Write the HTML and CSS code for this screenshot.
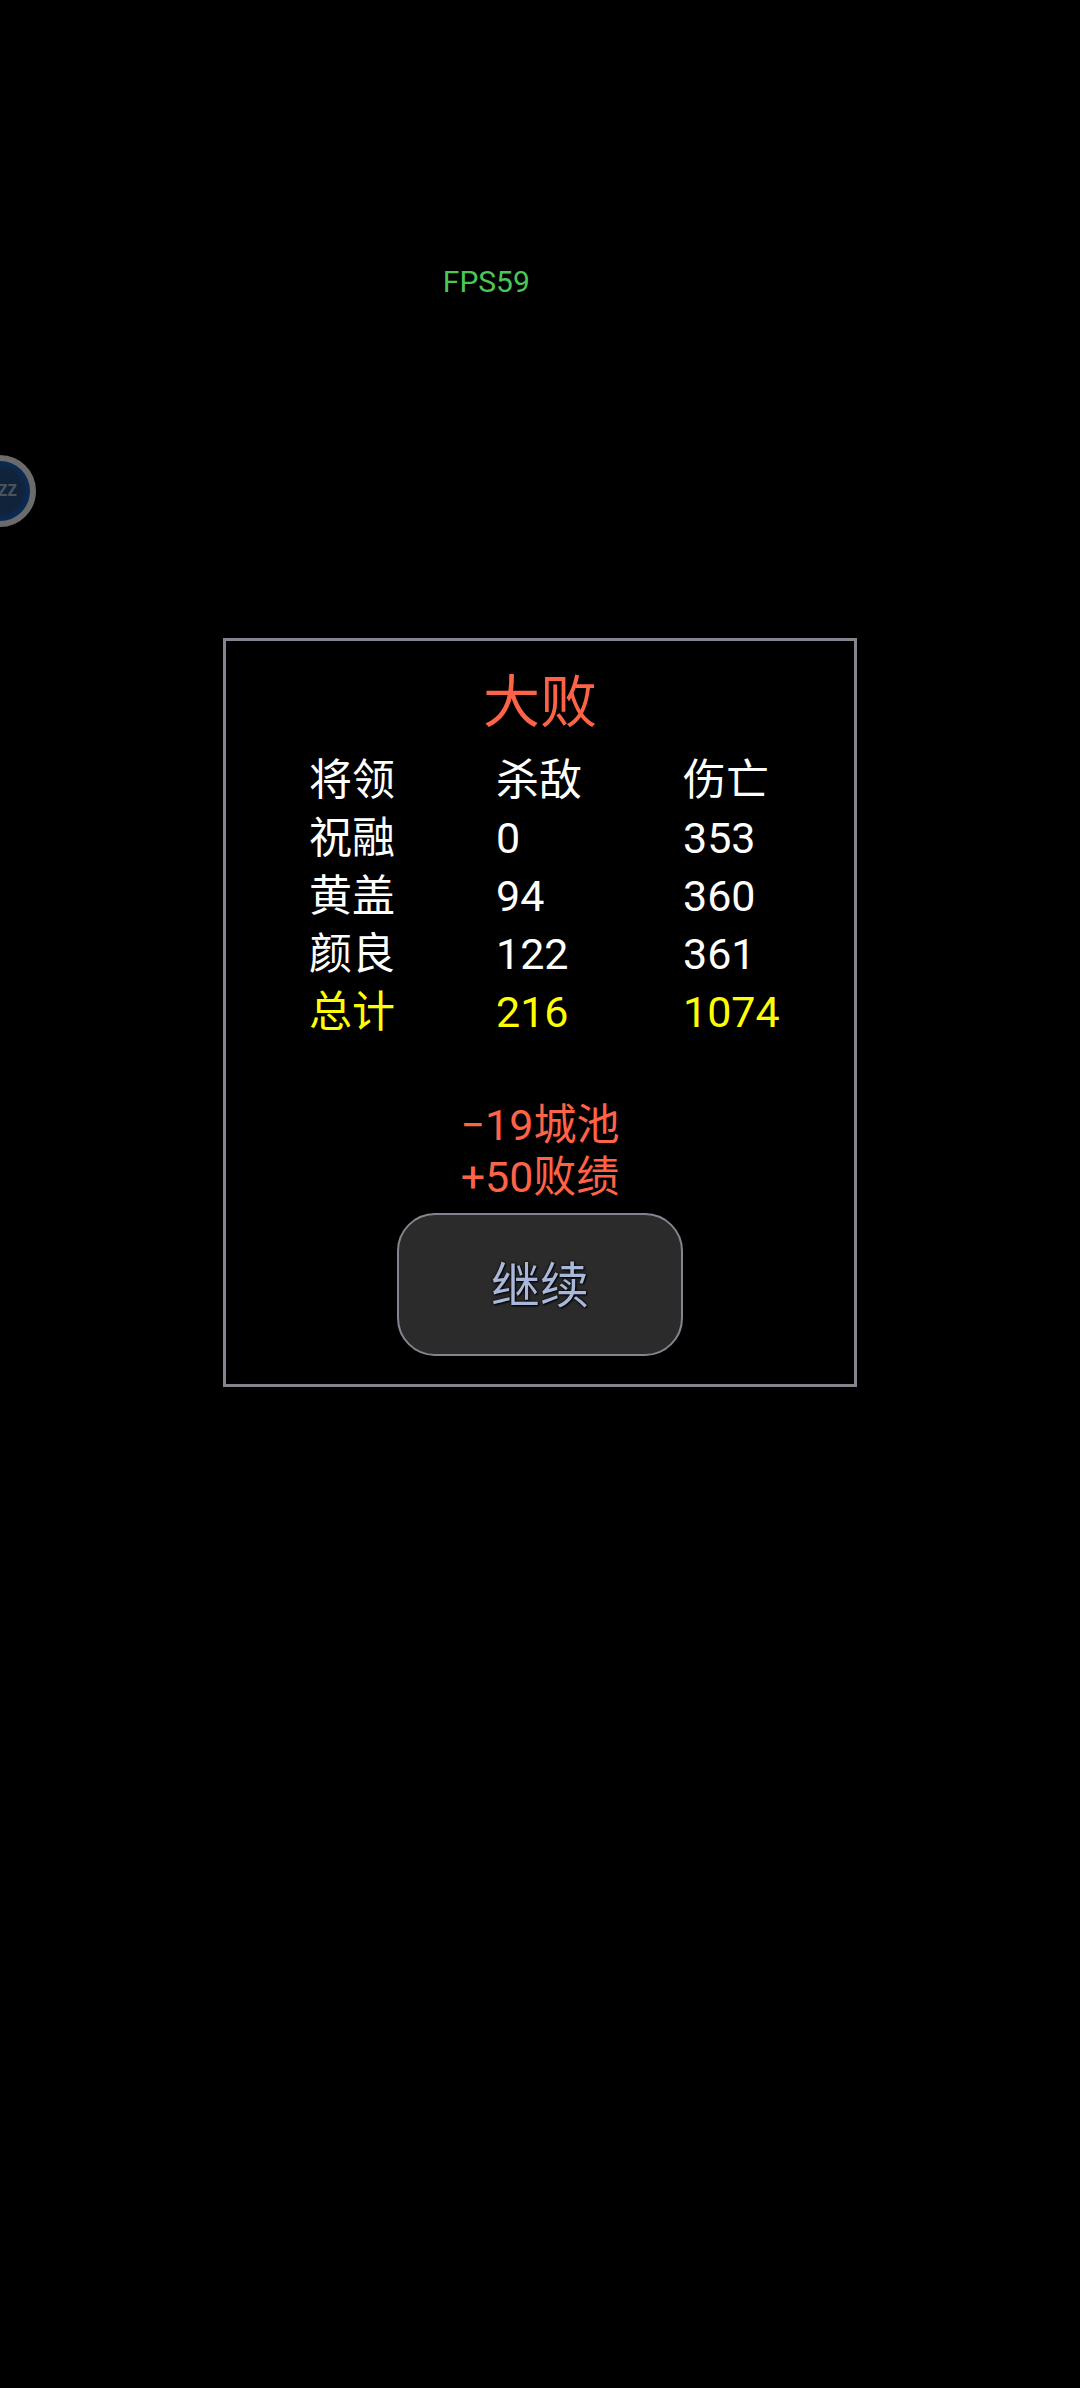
FILE: index.html
```html
<!DOCTYPE html>
<html lang="zh-CN">
<head>
<meta charset="utf-8">
<meta name="viewport" content="width=device-width, initial-scale=1">
<title>大败</title>
<link rel="stylesheet" href="styles.css">
</head>
<body>
<header class="hud"><span class="fps">FPS59</span></header>
<button class="floater" type="button">ZZ</button>
<main class="result">
  <h1 class="title">大败</h1>
  <table class="stats">
    <thead>
      <tr><th scope="col">将领</th><th scope="col">杀敌</th><th scope="col">伤亡</th></tr>
    </thead>
    <tbody>
      <tr><td>祝融</td><td>0</td><td>353</td></tr>
      <tr><td>黄盖</td><td>94</td><td>360</td></tr>
      <tr><td>颜良</td><td>122</td><td>361</td></tr>
    </tbody>
    <tfoot>
      <tr class="total"><td>总计</td><td>216</td><td>1074</td></tr>
    </tfoot>
  </table>
  <div class="outcome">
    <p>−19城池</p>
    <p>+50败绩</p>
  </div>
  <button class="continue" type="button">继续</button>
</main>
</body>
</html>
```
FILE: styles.css
```css
* {
  box-sizing: border-box;
}

body {
  margin: 0;
  min-height: 100vh;
  background: #000;
  color: #fff;
  font-family: Roboto, "Noto Sans CJK SC", sans-serif;
  font-size: 43px;
}

.hud {
  padding: 262px 0 336px 41%;
  font-size: 30px;
  line-height: 40px;
}

.fps {
  color: #4bc756;
}

/* Half-hidden assist ball docked at the screen edge */
.floater {
  position: absolute;
  top: 455px;
  left: -36px;
  width: 72px;
  height: 72px;
  padding: 0 13px 0 0;
  border: 6px solid #6b6b6b;
  border-radius: 50%;
  background: radial-gradient(circle, #10233a 0 22px, #0a2a52 28px);
  color: #4a535d;
  font: bold 16px/24px "DejaVu Sans Mono", monospace;
  text-align: right;
}

.result {
  display: flex;
  flex-direction: column;
  align-items: center;
  width: 634px;
  max-width: 100%;
  margin: 0 auto;
  padding: 24px 0 28px;
  border: 3px solid #85848e;
}

.title {
  margin: 0 0 10px;
  color: #ff6347;
  font-size: 57px;
  font-weight: 400;
  line-height: 76px;
}

.stats {
  align-self: flex-start;
  margin-left: 83px;
  border-collapse: collapse;
  line-height: 58px;
}

.stats th,
.stats td {
  min-width: 187px;
  width: 187px;
  padding: 0;
  font-weight: 400;
  text-align: left;
}

.stats th:last-child,
.stats td:last-child {
  min-width: 0;
  width: auto;
}

.total {
  color: #ff0;
}

.outcome {
  padding: 58px 0 10px;
  color: #ff6347;
  line-height: 52px;
  text-align: center;
}

.outcome p {
  margin: 0;
}

.continue {
  width: 286px;
  height: 143px;
  padding: 4px 0 0;
  border: 2px solid #85848e;
  border-radius: 38px;
  background: #2b2b2b;
  color: #a9b8da;
  font: 400 49px/72px Roboto, "Noto Sans CJK SC", sans-serif;
  text-shadow: 0 0 3px #000, 1px 1px 2px #000;
}
```
